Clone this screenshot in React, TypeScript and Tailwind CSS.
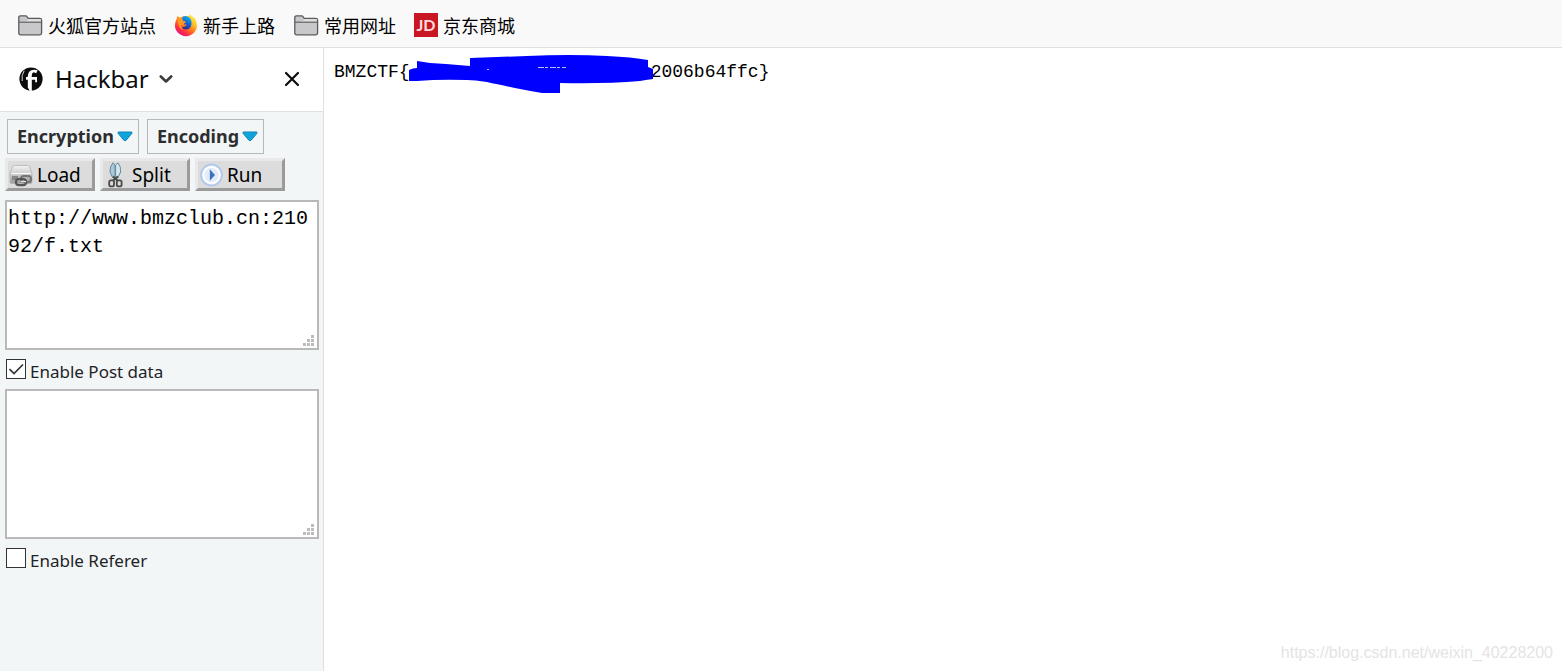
import React, { useState } from 'react';
import type { ReactNode } from 'react';

function FolderIcon() {
  return (
    <svg width="26" height="24" viewBox="0 0 26 24" aria-hidden="true">
      <path
        d="M1.8 20V4.5Q1.8 2.8 3.5 2.8H8.5Q9.6 2.8 10.2 3.8L11.2 5.3H22.8Q24.6 5.3 24.6 7V20Q24.6 21.8 22.8 21.8H3.6Q1.8 21.8 1.8 20Z"
        fill="#c8c8ca"
        stroke="#5b5b5e"
        strokeWidth="1.3"
      />
      <path d="M2.5 8.8H7.6Q8.8 8.8 9.8 8L11.4 5.9H22.7Q24 5.9 24 7V8.8Z" fill="#dededf" />
      <path d="M2 9.2H24.4" stroke="#5b5b5e" strokeWidth="1.1" />
    </svg>
  );
}

function FirefoxIcon() {
  return (
    <svg width="24" height="24" viewBox="0 0 24 24" aria-hidden="true">
      <defs>
        <linearGradient id="fox" x1="0.85" y1="0.05" x2="0.2" y2="0.95">
          <stop offset="0" stopColor="#fff24a" />
          <stop offset="0.3" stopColor="#ffc22b" />
          <stop offset="0.55" stopColor="#ff7b1d" />
          <stop offset="0.8" stopColor="#ff2a45" />
          <stop offset="1" stopColor="#e2128f" />
        </linearGradient>
        <linearGradient id="globe" x1="0.7" y1="0" x2="0.3" y2="1">
          <stop offset="0" stopColor="#12b4f0" />
          <stop offset="0.5" stopColor="#0b66d9" />
          <stop offset="1" stopColor="#35208c" />
        </linearGradient>
      </defs>
      <path
        d="M2.6 6.2L3.4 3L6 4.6Q8 3 11 3L15.5 3L15 1Q18.3 2.5 19.5 5L20.4 4Q23 8.3 23 12.6A11 10.6 0 0 1 1 12.6Q.9 8.8 2.6 6.2Z"
        fill="url(#fox)"
      />
      <path
        d="M8.4 4Q12 1.8 15.4 4.6Q18 7.3 17.4 11.4Q16.4 16.2 12.4 16.4Q8.8 16.4 7.6 13.4Q9.6 14.5 11.4 13.2Q13.2 12.4 12 11.4H9.8Q9.8 10.2 11.8 9.2Q11.5 8.3 9.4 8.2Q7.6 6.2 8.4 4Z"
        fill="url(#globe)"
      />
      <path d="M3.6 6Q5.5 4.4 7.8 5.2Q7.6 7 9.2 8.2Q11.5 8.2 11.8 9.4L9.6 10.6V12L7.6 11.6Q6.5 14.6 9.5 17Q4 16 3.6 6Z" fill="#ff9822" />
    </svg>
  );
}

function JdIcon() {
  return (
    <span className="flex h-6 w-6 items-center justify-center bg-[#c81623] font-['Lato',sans-serif] text-base leading-none font-bold text-[#ffdcdc]">
      JD
    </span>
  );
}

function HackbarLogo() {
  return (
    <svg width="24" height="24" viewBox="0 0 24 24" aria-hidden="true">
      <circle cx="12" cy="12" r="11.6" fill="#0c0c0d" />
      <path
        d="M18.6 3.2Q12.8 1.6 10.2 4.8Q8.8 6.8 8.8 9.8L7 10.2V12.8H8.8V20.6L10.8 24H12.8V12.8H16.2V15.2H18V10H12.8Q12.4 6 14.8 5.2L17.2 6.2Z"
        fill="#fff"
      />
      <path d="M5.2 3.8Q2.2 8 3.2 14" fill="none" stroke="#fff" strokeWidth=".8" />
    </svg>
  );
}

function LoadIcon() {
  return (
    <svg width="24" height="24" viewBox="0 0 24 24" aria-hidden="true">
      <defs>
        <linearGradient id="drive" x1="0" y1="0" x2="0" y2="1">
          <stop offset="0" stopColor="#f4f4f4" />
          <stop offset="1" stopColor="#9b9b9b" />
        </linearGradient>
      </defs>
      <path d="M5.5 2.5H18.5Q20 2.5 20.6 4L23 10V19Q23 20.5 21.5 20.5H2.5Q1 20.5 1 19V10L3.6 4Q4.2 2.5 5.5 2.5Z" fill="url(#drive)" stroke="#b2b2b2" strokeWidth=".8" />
      <path d="M2 10.5H22" stroke="#f8f8f8" strokeWidth="1.2" />
      <path d="M3 13H9V17H3Z" fill="#858585" />
      <g fill="none" strokeLinejoin="round">
        <rect x="12" y="13" width="10" height="6.2" rx="3" stroke="#757575" strokeWidth="2.2" />
        <rect x="7" y="16" width="10" height="6.2" rx="3" stroke="#555" strokeWidth="2.2" />
        <path d="M12 18.6H17" stroke="#e6e6e6" strokeWidth="1.2" />
      </g>
    </svg>
  );
}

function SplitIcon() {
  return (
    <svg width="24" height="26" viewBox="0 0 24 26" aria-hidden="true">
      <path d="M9 .8Q5.6 4.5 6 10L8.6 15.5L11 14.5V3Z" fill="#a9cbd9" stroke="#66899a" strokeWidth="1" />
      <path d="M14 .8Q17.2 4.5 16.6 10L14 15.5L11.6 14.5V3Z" fill="#d2e7ef" stroke="#66899a" strokeWidth="1" />
      <path d="M9 14.5L14 19M14 14.5L8.6 19" stroke="#4a4a4a" strokeWidth="2" />
      <rect x="5.2" y="18.4" width="4.8" height="6" rx="1.6" fill="#ddd" stroke="#4a4a4a" strokeWidth="1.8" />
      <rect x="12.8" y="18.4" width="4.8" height="6" rx="1.6" fill="#ddd" stroke="#4a4a4a" strokeWidth="1.8" />
    </svg>
  );
}

function RunIcon() {
  return (
    <svg width="24" height="24" viewBox="0 0 24 24" aria-hidden="true">
      <circle cx="12.5" cy="12" r="10.4" fill="#f4f8fd" stroke="#b3c9e8" strokeWidth="2" />
      <circle cx="12.5" cy="12" r="8" fill="#e3ecf8" stroke="#fff" strokeWidth="1.5" />
      <path d="M10.8 6.2L16 12L10.8 17.8Z" fill="#3f73bf" />
    </svg>
  );
}

function DropArrow() {
  return (
    <svg width="16" height="11" viewBox="0 0 16 11" aria-hidden="true">
      <path d="M1.2 1H14.8L15 2.2L9.2 9.2Q8 10.4 6.8 9.2L1 2.2Z" fill="#0ea5dc" stroke="#1583b5" strokeWidth="1" />
    </svg>
  );
}

function Bookmark({ icon, children }: { icon: ReactNode; children: ReactNode }) {
  return (
    <a href="#" className="flex items-center gap-[5px]">
      {icon}
      {children}
    </a>
  );
}

function MenuButton({ children }: { children: ReactNode }) {
  return (
    <button
      type="button"
      className="flex h-[35px] items-center gap-[3px] border border-[#b5b9ba] pr-[5px] pl-[9px] text-[18px] font-bold text-[#2e2e30]"
    >
      {children}
      <DropArrow />
    </button>
  );
}

function ActionButton({ icon, children }: { icon: ReactNode; children: ReactNode }) {
  return (
    <button
      type="button"
      className="flex h-[33px] w-[90px] items-center gap-1 border-3 border-t-[#e9e9e9] border-r-[#9b9b9b] border-b-[#9b9b9b] border-l-[#e9e9e9] bg-[#dcdcdc] pt-px pl-px text-[19px] text-black"
    >
      {icon}
      {children}
    </button>
  );
}

function ResizableBox({ label, initial }: { label: string; initial: string }) {
  const [value, setValue] = useState(initial);
  return (
    <div className="relative h-[150px]">
      <textarea
        aria-label={label}
        value={value}
        spellCheck={false}
        onChange={(e) => setValue(e.target.value)}
        className="block h-full w-full resize-none border-2 border-[#b9b9b9] bg-white px-px py-[3px] font-['Liberation_Mono',monospace] text-[20px] leading-7 break-all text-black outline-none"
      />
      <svg className="pointer-events-none absolute right-1 bottom-[3px]" width="12" height="12" viewBox="0 0 12 12" fill="#bcbcbc" aria-hidden="true">
        <path d="M8 0h3v3h-3zM4 4h3v3h-3zM8 4h3v3h-3zM0 8h3v3h-3zM4 8h3v3h-3zM8 8h3v3h-3z" />
      </svg>
    </div>
  );
}

function CheckRow({ label, initial }: { label: string; initial: boolean }) {
  const [checked, setChecked] = useState(initial);
  return (
    <label className="flex h-[39px] items-center gap-1 pl-px text-[17px] text-[#1f2326]">
      <span className="grid pb-[2px]">
        <input
          type="checkbox"
          checked={checked}
          onChange={(e) => setChecked(e.target.checked)}
          className="col-start-1 row-start-1 h-5 w-5 appearance-none border border-[#333] bg-white"
        />
        {checked && (
          <svg className="pointer-events-none col-start-1 row-start-1" width="20" height="20" viewBox="0 0 20 20" aria-hidden="true">
            <path d="M3.5 10.2L8 14.5L17 5.5" fill="none" stroke="#333" strokeWidth="1.7" />
          </svg>
        )}
      </span>
      <span className="pt-1">{label}</span>
    </label>
  );
}

function Scribble() {
  return (
    <svg width="246" height="40" viewBox="408 55 246 40" className="absolute top-[7px] left-[84px]" aria-hidden="true">
      <path
        d="M409 70Q413 68 417 68V61Q432 64 446 64L470 66V58L527 56Q570 54 607 56Q632 57 648 60V67L653 69V79Q645 80 640 81Q605 84 560 83V93H542Q530 91 520 89Q500 85 487 82Q475 80 467 80Q440 79 417 81L409 81Z"
        fill="#0000fe"
      />
      <path d="M538 67.5H566" stroke="#b9b9ff" strokeWidth="1" strokeDasharray="6 1 3 2" />
      <path d="M487 69.5h2" stroke="#b9b9ff" />
    </svg>
  );
}

export default function App() {
  return (
    <div className="flex min-h-screen flex-col bg-white font-['Noto_Sans','Noto_Sans_CJK_SC',sans-serif]">
      <nav className="flex h-12 items-center gap-[18px] border-b border-[#e0e0e1] bg-[#f9f9fa] pt-[3px] pl-[17px] font-['Noto_Sans_CJK_SC',sans-serif] text-[18px] text-black">
        <Bookmark icon={<FolderIcon />}>火狐官方站点</Bookmark>
        <Bookmark icon={<FirefoxIcon />}>新手上路</Bookmark>
        <Bookmark icon={<FolderIcon />}>常用网址</Bookmark>
        <Bookmark icon={<JdIcon />}>京东商城</Bookmark>
      </nav>

      <div className="flex flex-1">
        <aside className="w-[324px] shrink-0 border-r border-[#e0e0e1] bg-[#f2f6f7]">
          <header className="flex h-16 items-center justify-between border-b border-[#e0e0e1] bg-white pr-[23px] pb-[2px] pl-[19px]">
            <button type="button" className="flex items-center text-[24px] text-[#0c0c0d]">
              <HackbarLogo />
              <span className="ml-3">Hackbar</span>
              <svg className="ml-[10px]" width="14" height="10" viewBox="0 0 14 10" aria-hidden="true">
                <path d="M1.8 2.5L7 7.5L12.2 2.5" fill="none" stroke="#3c3c3d" strokeWidth="2.6" strokeLinecap="round" strokeLinejoin="round" />
              </svg>
            </button>
            <button type="button" aria-label="Close sidebar">
              <svg width="16" height="16" viewBox="0 0 16 16" aria-hidden="true">
                <path d="M2 2L14 14M14 2L2 14" stroke="#0c0c0d" strokeWidth="2.2" strokeLinecap="round" />
              </svg>
            </button>
          </header>

          <div className="pt-[7px] pr-1 pl-[5px]">
            <div className="flex gap-2 pl-[2px]">
              <MenuButton>Encryption</MenuButton>
              <MenuButton>Encoding</MenuButton>
            </div>
            <div className="mt-1 mb-[9px] flex gap-[5px]">
              <ActionButton icon={<LoadIcon />}>Load</ActionButton>
              <ActionButton icon={<SplitIcon />}>Split</ActionButton>
              <ActionButton icon={<RunIcon />}>Run</ActionButton>
            </div>
            <ResizableBox label="URL" initial="http://www.bmzclub.cn:21092/f.txt" />
            <CheckRow label="Enable Post data" initial={true} />
            <ResizableBox label="Post data" initial="" />
            <CheckRow label="Enable Referer" initial={false} />
          </div>
        </aside>

        <main className="flex flex-1 flex-col justify-between">
          <div className="relative flex gap-[241px] pt-[10px] pl-[10px] font-['Liberation_Mono',monospace] text-[18px] leading-7 text-black">
            <span>BMZCTF{'{'}</span>
            <span>2006b64ffc{'}'}</span>
            <Scribble />
          </div>
          <footer className="pr-[9px] pb-[6px] text-right font-['Liberation_Sans',sans-serif] text-base text-[#e4e4e4]">
            https://blog.csdn.net/weixin_40228200
          </footer>
        </main>
      </div>
    </div>
  );
}
